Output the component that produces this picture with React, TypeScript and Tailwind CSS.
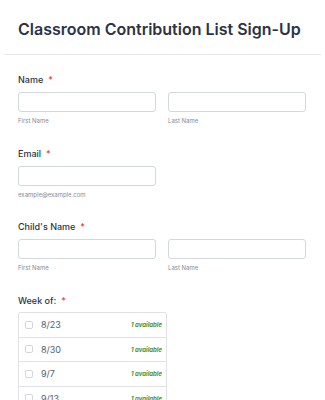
import React from "react";

const weeks = ["8/23", "8/30", "9/7", "9/13"];

function Label({ text }: { text: string }) {
  return (
    <div className="h-[14px] text-[9px] leading-[14px] font-medium text-[#2c3345]">
      {text}
      <span className="ml-[5px] text-[#f23a3c]">*</span>
    </div>
  );
}

function Field({ sub }: { sub: string }) {
  return (
    <div className="flex w-[138px] flex-col">
      <div className="h-[20px] rounded-[3px] border border-[#d3d7de] bg-white" />
      <div className="mt-[4px] h-[10px] text-[6px] leading-[10px] text-[#858b98]">{sub}</div>
    </div>
  );
}

export default function App() {
  return (
    <div className="h-[400px] w-[325px] overflow-hidden bg-white font-['Inter',sans-serif]">
      <div className="px-[18px] pt-[16px] pb-[12px]">
        <h1 className="h-[26px] text-[16px] leading-[26px] font-semibold whitespace-nowrap text-[#2c3345]">
          Classroom Contribution List Sign-Up
        </h1>
      </div>
      <div className="mx-[4px] h-[1px] bg-[#e6e7eb]" />

      <div className="flex flex-col gap-[20.5px] px-[18px] pt-[18px]">
        <div>
          <Label text="Name" />
          <div className="mt-[5px] flex gap-[12px]">
            <Field sub="First Name" />
            <Field sub="Last Name" />
          </div>
        </div>

        <div>
          <Label text="Email" />
          <div className="mt-[5px] flex">
            <Field sub="example@example.com" />
          </div>
        </div>

        <div>
          <Label text="Child's Name" />
          <div className="mt-[5px] flex gap-[12px]">
            <Field sub="First Name" />
            <Field sub="Last Name" />
          </div>
        </div>

        <div>
          <Label text="Week of:" />
          <div className="mt-[4.5px] w-[149px] rounded-[2px] border border-[#e0e2e7]">
            {weeks.map((w) => (
              <div
                key={w}
                className="flex h-[24.5px] items-center border-b border-[#e0e2e7] pr-[4px] pl-[6px]"
              >
                <span className="h-[8px] w-[8px] rounded-[2px] border border-[#d3d7de] bg-white" />
                <span className="ml-[8px] text-[9px] text-[#585e6d]">{w}</span>
                <span className="ml-auto text-[6px] font-bold italic text-[#4f8f2f]">1 available</span>
              </div>
            ))}
          </div>
        </div>
      </div>
    </div>
  );
}
